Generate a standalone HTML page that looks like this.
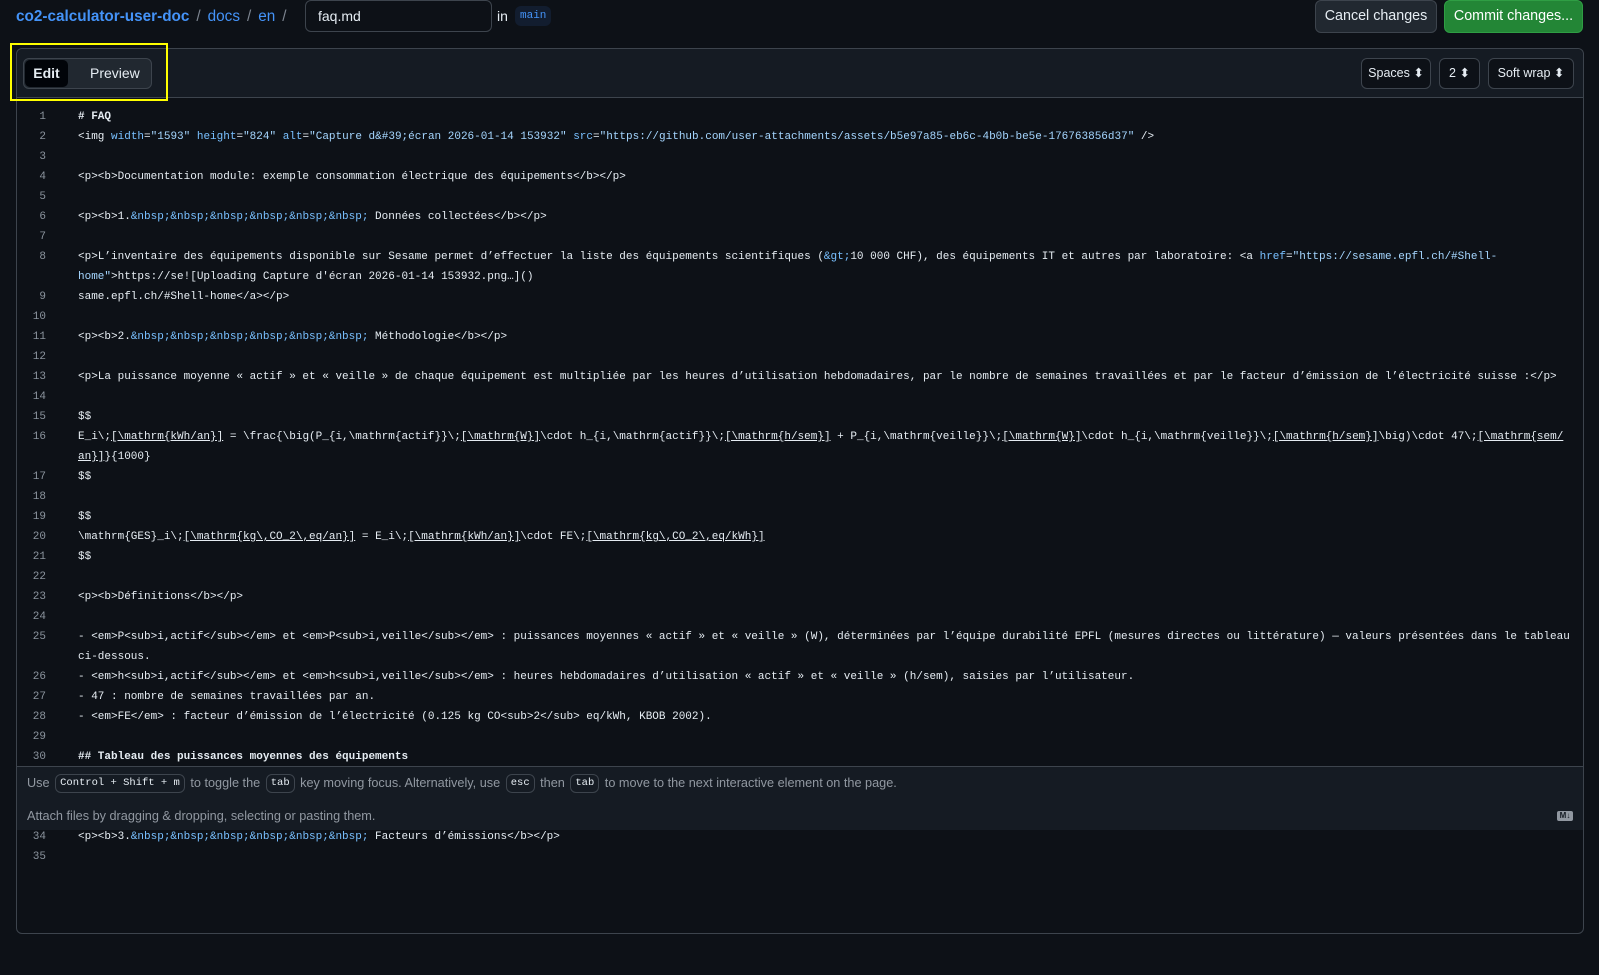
<!DOCTYPE html>
<html><head><meta charset="utf-8">
<style>
*{box-sizing:border-box;margin:0;padding:0}
body{width:1599px;height:975px;background:#0d1117;font-family:"Liberation Sans",sans-serif;color:#e6edf3;position:relative;overflow:hidden}
.a{position:absolute}
.crumb{left:16px;top:6px;font-size:15.3px;line-height:22px;color:#4493f8;white-space:nowrap}
.crumb b{font-weight:600}
.crumb .s{color:#7d8590;margin:0 7px}
.fname{left:305px;top:0px;width:187px;height:32px;border:1px solid #3d444d;border-radius:6px;font-size:14px;line-height:30px;padding-left:12px;color:#e6edf3}
.in{left:497px;top:8px;font-size:14px}
.main{left:515px;top:6px;height:20px;padding:0 5px;background:#121d2f;border-radius:6px;color:#4493f8;font-family:"Liberation Mono",monospace;font-size:11px;line-height:20px}
.btn{top:0px;height:33px;border-radius:6px;font-size:14.3px;line-height:31px;text-align:center}
.cancel{left:1315px;width:122px;background:#212830;border:1px solid #3d444d}
.commit{left:1444px;width:139px;background:#238636;border:1px solid #2f9e44;color:#fff}
.box{left:16px;top:48px;width:1568px;height:886px;border:1px solid #3d444d;border-radius:6px}
.hdr{left:17px;top:49px;width:1566px;height:49px;background:#151b23;border-bottom:1px solid #3d444d;border-radius:6px 6px 0 0}
.seg{left:23px;top:58px;width:129px;height:31px;background:#212830;border:1px solid #3d444d;border-radius:6px}
.edit{left:25px;top:60px;width:43px;height:27px;background:#010409;border-radius:5px;font-size:14px;font-weight:700;line-height:27px;text-align:center}
.prev{left:90px;top:60px;font-size:14px;line-height:27px}
.yl{left:10px;top:43px;width:158px;height:58px;border:2px solid #ffff00}
.sel{top:58px;height:31px;border:1px solid #3d444d;border-radius:6px;font-size:12.5px;line-height:29px;text-align:center;background:#0d1117}
.code{left:17px;top:107px;width:1566px;font-family:"Liberation Mono",monospace;font-size:11px;line-height:20px;color:#e6edf3}
.r{height:20px;white-space:pre;position:relative}
.r .n{position:absolute;left:0;width:29px;text-align:right;color:#8b949e}
.r .t{position:absolute;left:61px}
.at{color:#79c0ff}.st{color:#a5d6ff}.en{color:#79c0ff}
.u{text-decoration:underline}
.bt{font-weight:700}
.help{left:17px;top:766px;width:1566px;height:64px;background:#151b23;border-top:1px solid #3d444d;font-size:12.7px;color:#9198a1}
.kbd{display:inline-block;border:1px solid #3d444d;border-radius:6px;padding:0 4px;font-family:"Liberation Mono",monospace;font-size:10.5px;line-height:17px;color:#e6edf3;vertical-align:middle;margin:0 2px}
</style></head><body>
<div class="a crumb"><b>co2-calculator-user-doc</b><span class="s">/</span>docs<span class="s">/</span>en<span class="s">/</span></div>
<div class="a fname">faq.md</div>
<div class="a in">in</div>
<div class="a main">main</div>
<div class="a btn cancel">Cancel changes</div>
<div class="a btn commit">Commit changes...</div>

<div class="a box"></div>
<div class="a hdr"></div>
<div class="a seg"></div>
<div class="a edit">Edit</div>
<div class="a prev">Preview</div>
<div class="a yl"></div>
<div class="a sel" style="left:1361px;width:70px">Spaces &#x2B0D;</div>
<div class="a sel" style="left:1439px;width:41px">2 &#x2B0D;</div>
<div class="a sel" style="left:1488px;width:86px">Soft wrap &#x2B0D;</div>

<div class="a code">
<div class="r"><span class="n">1</span><span class="t bt"># FAQ</span></div>
<div class="r"><span class="n">2</span><span class="t">&lt;img <span class="at">width</span>=<span class="st">"1593"</span> <span class="at">height</span>=<span class="st">"824"</span> <span class="at">alt</span>=<span class="st">"Capture d&amp;#39;écran 2026-01-14 153932"</span> <span class="at">src</span>=<span class="st">"https://github.com/user-attachments/assets/b5e97a85-eb6c-4b0b-be5e-176763856d37"</span> /&gt;</span></div>
<div class="r"><span class="n">3</span></div>
<div class="r"><span class="n">4</span><span class="t">&lt;p&gt;&lt;b&gt;Documentation module: exemple consommation électrique des équipements&lt;/b&gt;&lt;/p&gt;</span></div>
<div class="r"><span class="n">5</span></div>
<div class="r"><span class="n">6</span><span class="t">&lt;p&gt;&lt;b&gt;1.<span class="en">&amp;nbsp;&amp;nbsp;&amp;nbsp;&amp;nbsp;&amp;nbsp;&amp;nbsp;</span> Données collectées&lt;/b&gt;&lt;/p&gt;</span></div>
<div class="r"><span class="n">7</span></div>
<div class="r"><span class="n">8</span><span class="t">&lt;p&gt;L’inventaire des équipements disponible sur Sesame permet d’effectuer la liste des équipements scientifiques (<span class="en">&amp;gt;</span>10 000 CHF), des équipements IT et autres par laboratoire: &lt;a <span class="at">href</span>=<span class="st">"https://sesame.epfl.ch/#Shell-</span></span></div>
<div class="r"><span class="t"><span class="st">home"</span>&gt;https://se![Uploading Capture d'écran 2026-01-14 153932.png…]()</span></div>
<div class="r"><span class="n">9</span><span class="t">same.epfl.ch/#Shell-home&lt;/a&gt;&lt;/p&gt;</span></div>
<div class="r"><span class="n">10</span></div>
<div class="r"><span class="n">11</span><span class="t">&lt;p&gt;&lt;b&gt;2.<span class="en">&amp;nbsp;&amp;nbsp;&amp;nbsp;&amp;nbsp;&amp;nbsp;&amp;nbsp;</span> Méthodologie&lt;/b&gt;&lt;/p&gt;</span></div>
<div class="r"><span class="n">12</span></div>
<div class="r"><span class="n">13</span><span class="t">&lt;p&gt;La puissance moyenne « actif » et « veille » de chaque équipement est multipliée par les heures d’utilisation hebdomadaires, par le nombre de semaines travaillées et par le facteur d’émission de l’électricité suisse :&lt;/p&gt;</span></div>
<div class="r"><span class="n">14</span></div>
<div class="r"><span class="n">15</span><span class="t">$$</span></div>
<div class="r"><span class="n">16</span><span class="t">E_i\;<span class="u">[\mathrm{kWh/an}]</span> = \frac{\big(P_{i,\mathrm{actif}}\;<span class="u">[\mathrm{W}]</span>\cdot h_{i,\mathrm{actif}}\;<span class="u">[\mathrm{h/sem}]</span> + P_{i,\mathrm{veille}}\;<span class="u">[\mathrm{W}]</span>\cdot h_{i,\mathrm{veille}}\;<span class="u">[\mathrm{h/sem}]</span>\big)\cdot 47\;<span class="u">[\mathrm{sem/</span></span></div>
<div class="r"><span class="t"><span class="u">an}]</span>}{1000}</span></div>
<div class="r"><span class="n">17</span><span class="t">$$</span></div>
<div class="r"><span class="n">18</span></div>
<div class="r"><span class="n">19</span><span class="t">$$</span></div>
<div class="r"><span class="n">20</span><span class="t">\mathrm{GES}_i\;<span class="u">[\mathrm{kg\,CO_2\,eq/an}]</span> = E_i\;<span class="u">[\mathrm{kWh/an}]</span>\cdot FE\;<span class="u">[\mathrm{kg\,CO_2\,eq/kWh}]</span></span></div>
<div class="r"><span class="n">21</span><span class="t">$$</span></div>
<div class="r"><span class="n">22</span></div>
<div class="r"><span class="n">23</span><span class="t">&lt;p&gt;&lt;b&gt;Définitions&lt;/b&gt;&lt;/p&gt;</span></div>
<div class="r"><span class="n">24</span></div>
<div class="r"><span class="n">25</span><span class="t">- &lt;em&gt;P&lt;sub&gt;i,actif&lt;/sub&gt;&lt;/em&gt; et &lt;em&gt;P&lt;sub&gt;i,veille&lt;/sub&gt;&lt;/em&gt; : puissances moyennes « actif » et « veille » (W), déterminées par l’équipe durabilité EPFL (mesures directes ou littérature) — valeurs présentées dans le tableau</span></div>
<div class="r"><span class="t">ci-dessous.</span></div>
<div class="r"><span class="n">26</span><span class="t">- &lt;em&gt;h&lt;sub&gt;i,actif&lt;/sub&gt;&lt;/em&gt; et &lt;em&gt;h&lt;sub&gt;i,veille&lt;/sub&gt;&lt;/em&gt; : heures hebdomadaires d’utilisation « actif » et « veille » (h/sem), saisies par l’utilisateur.</span></div>
<div class="r"><span class="n">27</span><span class="t">- 47 : nombre de semaines travaillées par an.</span></div>
<div class="r"><span class="n">28</span><span class="t">- &lt;em&gt;FE&lt;/em&gt; : facteur d’émission de l’électricité (0.125 kg CO&lt;sub&gt;2&lt;/sub&gt; eq/kWh, KBOB 2002).</span></div>
<div class="r"><span class="n">29</span></div>
<div class="r"><span class="n">30</span><span class="t bt">## Tableau des puissances moyennes des équipements</span></div>
</div>

<div class="a help">
<div class="a" style="left:10px;top:7px;white-space:nowrap">Use <span class="kbd">Control + Shift + m</span> to toggle the <span class="kbd">tab</span> key moving focus. Alternatively, use <span class="kbd">esc</span> then <span class="kbd">tab</span> to move to the next interactive element on the page.</div>
<div class="a" style="left:10px;top:42px">Attach files by dragging &amp; dropping, selecting or pasting them.</div>
<div class="a" style="left:1540px;top:44px;width:16px;height:10px;background:#9198a1;border-radius:2px;color:#151b23;font-size:8px;font-weight:700;line-height:10px;text-align:center">M↓</div>
</div>

<div class="a code" style="top:827px">
<div class="r"><span class="n">34</span><span class="t">&lt;p&gt;&lt;b&gt;3.<span class="en">&amp;nbsp;&amp;nbsp;&amp;nbsp;&amp;nbsp;&amp;nbsp;&amp;nbsp;</span> Facteurs d’émissions&lt;/b&gt;&lt;/p&gt;</span></div>
<div class="r"><span class="n">35</span></div>
</div>
</body></html>
